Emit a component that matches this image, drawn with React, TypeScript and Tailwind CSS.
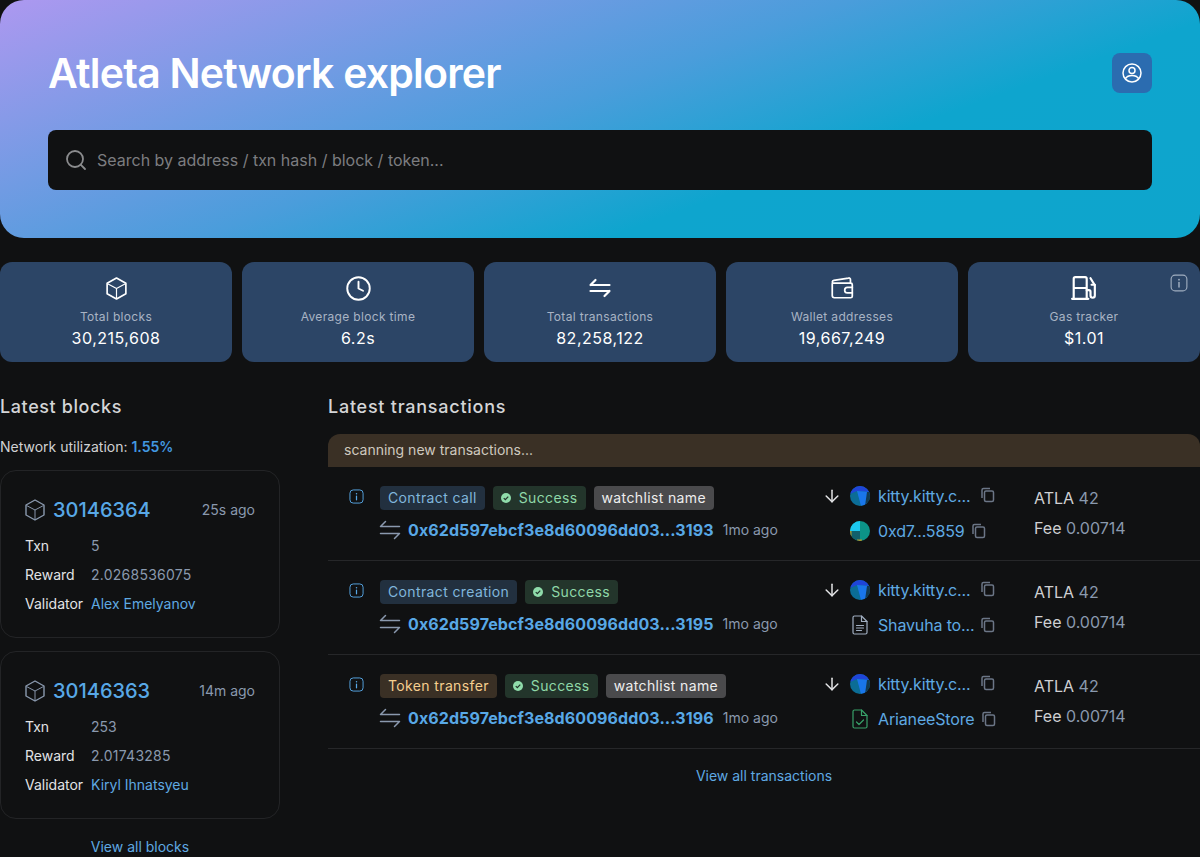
import { useState } from 'react'
import { Search, Clock, ArrowDown } from 'lucide-react'

// ── small drawn icons ──

const CubeIcon = ({ className, strokeWidth = 1.5 }: { className?: string; strokeWidth?: number }) => (
  <svg viewBox="0 0 24 24" fill="none" stroke="currentColor" strokeWidth={strokeWidth} strokeLinejoin="round" className={className}>
    <path d="M12 2 21 7v10l-9 5-9-5V7l9-5Z" />
    <path d="M3.500 7.500 12 12l8.500-4.500M12 12v10" strokeWidth={strokeWidth * 0.7} />
  </svg>
)

const SwapIcon = ({ className, strokeWidth = 1.6, gap = 6.5 }: { className?: string; strokeWidth?: number; gap?: number }) => (
  <svg viewBox="0 0 24 24" fill="none" stroke="currentColor" strokeWidth={strokeWidth} strokeLinecap="round" strokeLinejoin="round" className={className}>
    <path d={`M2.500 ${12 - gap / 2}h19M2.500 ${12 - gap / 2}l5-5`} />
    <path d={`M21.500 ${12 + gap / 2}h-19M21.500 ${12 + gap / 2}l-5 5`} />
  </svg>
)

const WalletIcon = ({ className }: { className?: string }) => (
  <svg viewBox="0 0 24 24" fill="none" stroke="currentColor" strokeWidth="1.600" strokeLinejoin="round" strokeLinecap="round" className={className}>
    <path d="M3 8v11a2 2 0 0 0 2 2h15a1.500 1.500 0 0 0 1.500-1.500V9a1.500 1.500 0 0 0-1.500-1.500H4.500A1.500 1.500 0 0 1 3 6.500 1.800 1.800 0 0 1 4.500 5L18 2.800c1-.2 1.800.5 1.800 1.500v3.200" />
    <path d="M21.500 11.500H17a2.500 2.500 0 0 0 0 5h4.500" />
  </svg>
)

const GasIcon = ({ className }: { className?: string }) => (
  <svg viewBox="0 0 24 24" fill="none" stroke="currentColor" strokeWidth="2" strokeLinejoin="round" strokeLinecap="round" className={className}>
    <path d="M1 22h15M2.500 22V3.500A1.500 1.500 0 0 1 4 2H13A1.500 1.500 0 0 1 14.500 3.500V22M2.500 12h12" />
    <path d="M14.500 14h2a1.500 1.500 0 0 1 1.500 1.500v3.500a2 2 0 0 0 4 0V9.500L18 3" />
    <path d="M19 9h3" />
  </svg>
)

const InfoIcon = ({ className }: { className?: string }) => (
  <svg viewBox="0 0 16 16" fill="none" className={className}>
    <rect x="1" y="1" width="14" height="14" rx="3.500" stroke="currentColor" strokeWidth="1" />
    <circle cx="8" cy="5" r=".8" fill="currentColor" />
    <path d="M8 7.500v4" stroke="currentColor" strokeWidth="1.300" strokeLinecap="round" />
  </svg>
)

const UserIcon = ({ className }: { className?: string }) => (
  <svg viewBox="0 0 20 20" fill="none" stroke="currentColor" strokeWidth="1.500" className={className}>
    <circle cx="10" cy="10" r="9" />
    <circle cx="10" cy="7.500" r="3" />
    <path d="M3.500 15.500C5 13 7.500 12.500 10 12.500s5 .5 6.500 3" />
  </svg>
)

const CopyIcon = ({ className }: { className?: string }) => (
  <svg viewBox="0 0 16 16" fill="none" stroke="currentColor" strokeWidth="1.500" strokeLinejoin="round" className={className}>
    <rect x="4.500" y="4" width="9" height="10.500" rx="1.500" />
    <path d="M2 11V3A1.500 1.500 0 0 1 3.500 1.500H10" />
  </svg>
)

const SuccessIcon = () => (
  <svg viewBox="0 0 12 12" className="w-[10px] h-[10px] shrink-0">
    <circle cx="6" cy="6" r="6" fill="#8fdcaa" />
    <path d="M3.300 6.200 5.200 8l3.500-3.700" fill="none" stroke="#23352b" strokeWidth="1.500" />
  </svg>
)

const DocIcon = ({ className, check }: { className?: string; check?: boolean }) => (
  <svg viewBox="0 0 16 20" fill="none" stroke="currentColor" strokeWidth="1.200" strokeLinejoin="round" strokeLinecap="round" className={className}>
    <path d="M2.500 1h7L15 6.500V17.500a1.500 1.500 0 0 1-1.500 1.500h-11A1.500 1.500 0 0 1 1 17.500v-15A1.500 1.500 0 0 1 2.500 1Z" />
    <path d="M9.500 1v5.500H15" />
    {check ? <path d="M4.500 13l2.500 2.500 4.500-4.500" /> : <path d="M4.500 10.500h7M4.500 13h7M4.500 15.500h5" />}
  </svg>
)

// identicons are just little pie shapes
const KittyAvatar = () => (
  <svg viewBox="0 0 20 20" className="w-5 h-5 shrink-0 rounded-full">
    <rect width="20" height="20" fill="#0b6d96" />
    <path d="M0 0h20v6L7 5 0 8Z" fill="#1f45d8" />
    <path d="M7 5l13 1-4 14H11Z" fill="#1976ea" />
    <path d="M17 6h3v14h-5Z" fill="#123a52" />
  </svg>
)

const PieAvatar = () => (
  <svg viewBox="0 0 20 20" className="w-5 h-5 shrink-0 rounded-full">
    <rect width="20" height="20" fill="#0c9488" />
    <path d="M0 0h10v10H0Z" fill="#1cc8ef" />
    <path d="M0 10h10v10H0Z" fill="#11606c" />
    <path d="M0 10h1.500v10H0ZM7 18.500h5V20H7Z" fill="#b59a2a" />
  </svg>
)

// ── data ──

const STATS = [
  { icon: <CubeIcon className="w-[25px] h-[25px]" strokeWidth={1.6} />, label: 'Total blocks', value: '30,215,608' },
  { icon: <Clock className="w-[27px] h-[27px]" strokeWidth={1.7} />, label: 'Average block time', value: '6.2s' },
  { icon: <SwapIcon className="w-6 h-6" strokeWidth={2.200} gap={6} />, label: 'Total transactions', value: '82,258,122' },
  { icon: <WalletIcon className="w-[26px] h-[26px]" />, label: 'Wallet addresses', value: '19,667,249' },
  { icon: <GasIcon className="w-[26px] h-[26px]" />, label: 'Gas tracker', value: '$1.01', info: true },
]

const BLOCKS = [
  { num: '30146364', ago: '25s ago', txn: '5', reward: '2.0268536075', validator: 'Alex Emelyanov' },
  { num: '30146363', ago: '14m ago', txn: '253', reward: '2.01743285', validator: 'Kiryl Ihnatsyeu' },
]

const TXS = [
  {
    type: 'Contract call', typeClass: 'bg-[#22303f] text-[#80b6dc]', watch: true,
    hash: '0x62d597ebcf3e8d60096dd03...3193',
    to: '0xd7...5859', toIcon: <PieAvatar />,
  },
  {
    type: 'Contract creation', typeClass: 'bg-[#22303f] text-[#80b6dc]', watch: false,
    hash: '0x62d597ebcf3e8d60096dd03...3195',
    to: 'Shavuha to...', toIcon: <DocIcon className="w-[16px] h-5 ml-[2px] mr-[2px] shrink-0 text-[#a0aec0]" />,
  },
  {
    type: 'Token transfer', typeClass: 'bg-[#3a3025] text-[#f6cf8f]', watch: true,
    hash: '0x62d597ebcf3e8d60096dd03...3196',
    to: 'ArianeeStore', toIcon: <DocIcon check className="w-[16px] h-5 ml-[2px] mr-[2px] shrink-0 text-[#38a169]" />,
  },
]

export default function App() {
  const [query, setQuery] = useState('')

  return (
    <div className="min-h-screen bg-[#101112] font-['Inter',sans-serif] text-sm text-[#e2e3e5]">
      {/* ── Hero ── */}
      <header className="h-[238px] rounded-3xl px-12 pt-12 bg-[linear-gradient(160deg,#ad98f0_0%,#4a9ddb_46%,#0ea5ce_68%,#0ea5cc_100%)]">
        <div className="flex items-center justify-between h-[50px]">
          <h1 className="text-[41px] leading-[50px] font-semibold text-white tracking-[-0.78px]">
            Atleta Network explorer
          </h1>
          <button className="w-10 h-10 rounded-lg bg-[#2b6cb0] flex items-center justify-center text-white">
            <UserIcon className="w-5 h-5" />
          </button>
        </div>
        <div className="mt-[32px] h-[60px] rounded-lg bg-[#101112] flex items-center pl-[16px] pr-4 gap-[9px]">
          <Search className="w-6 h-6 text-[#8b8c8e]" strokeWidth={1.8} />
          <input
            value={query}
            onChange={(e) => setQuery(e.target.value)}
            placeholder="Search by address / txn hash / block / token..."
            className="flex-1 bg-transparent outline-none text-base text-white placeholder:text-[#7c7d80]"
          />
        </div>
      </header>

      {/* ── Stats ── */}
      <section className="grid grid-cols-5 gap-[10px] mt-6">
        {STATS.map((s) => (
          <div key={s.label} className="relative h-[100px] rounded-xl bg-[#2c4566] flex flex-col items-center pt-[14px] text-white">
            {s.info && <InfoIcon className="absolute top-[12px] right-[12px] w-[18px] h-[18px] text-[#a0aec0]" />}
            <div className="h-6 flex items-center justify-center">{s.icon}</div>
            <div className="mt-[9px] text-xs leading-4 tracking-[0.33px] text-[#a9b4c4]">{s.label}</div>
            <div className="mt-[1px] text-base leading-6 tracking-[0.5px]">{s.value}</div>
          </div>
        ))}
      </section>

      {/* ── Lists ── */}
      <main className="flex gap-12 mt-[32px]">
        <section className="w-[280px] shrink-0">
          <h2 className="pt-px text-lg leading-6 font-medium text-[#d4d5d7] tracking-[0.6px]">Latest blocks</h2>
          <div className="mt-[18px] leading-[20px] text-[#d0d1d3]">
            Network utilization: <span className="font-semibold text-[#4299e1]">1.55%</span>
          </div>
          <div className="mt-[13px] flex flex-col gap-[13px]">
            {BLOCKS.map((b) => (
              <div key={b.num} className="h-[168px] rounded-2xl border border-[#232426] px-6 pt-[20px]">
                <div className="flex items-center h-[38px]">
                  <CubeIcon className="w-6 h-6 -ml-[2px] text-[#8a99ae]" strokeWidth={1.4} />
                  <span className="ml-[6px] text-xl font-medium text-[#58a8e6]">{b.num}</span>
                  <span className="ml-auto text-[#8a99ae]">{b.ago}</span>
                </div>
                <div className="mt-[7px] grid grid-cols-[66px_1fr] gap-y-[9px] leading-5">
                  <span>Txn</span>
                  <span className="text-[#8a99ae]">{b.txn}</span>
                  <span>Reward</span>
                  <span className="text-[#8a99ae] tracking-[0.25px]">{b.reward}</span>
                  <span>Validator</span>
                  <span className="text-[#5fa9e2]">{b.validator}</span>
                </div>
              </div>
            ))}
          </div>
          <div className="mt-[18px] text-center text-[#5fa9e2] leading-5">View all blocks</div>
        </section>

        <section className="flex-1 min-w-0">
          <h2 className="pt-px text-lg leading-6 font-medium text-[#d4d5d7] tracking-[0.75px]">Latest transactions</h2>
          <div className="mt-[15px] h-[33px] pb-px rounded-t-xl bg-[#3a3025] px-4 flex items-center text-[#cfc9bf]">
            scanning new transactions...
          </div>
          {TXS.map((t) => (
            <div key={t.hash} className="h-[94px] border-b border-[#262729] flex pl-[21px]">
              <InfoIcon className="w-[15px] h-[15px] mt-[22px] text-[#58a8e6] shrink-0" />
              <div className="ml-[16px] w-[445px] shrink-0 pt-[19px]">
                <div className="flex gap-2 tracking-[0.37px]">
                  <span className={`h-6 px-2 rounded flex items-center ${t.typeClass}`}>{t.type}</span>
                  <span className="h-6 px-2 rounded flex items-center gap-[8px] bg-[#23352b] text-[#8fd8a8]">
                    <SuccessIcon />
                    Success
                  </span>
                  {t.watch && <span className="h-6 px-2 rounded flex items-center bg-[#4a4a4c] text-[#eeeeee]">watchlist name</span>}
                </div>
                <div className="mt-[8px] flex items-center h-6">
                  <SwapIcon className="w-6 h-6 -ml-[2px] text-[#8a99ae]" strokeWidth={1.5} gap={7} />
                  <span className="ml-[6px] text-base font-bold tracking-[0.1px] text-[#58a8e6]">{t.hash}</span>
                  <span className="ml-[9px] text-[#8a99ae]">1mo ago</span>
                </div>
              </div>
              <div className="w-[209px] shrink-0 pt-[17px]">
                <div className="flex items-center h-6">
                  <ArrowDown className="w-5 h-5 -ml-[3px] mr-[8px] text-[#e2e3e5]" strokeWidth={1.8} />
                  <KittyAvatar />
                  <span className="ml-2 text-base tracking-[-0.15px] text-[#5fa9e2]">kitty.kitty.c...</span>
                  <CopyIcon className="ml-[10px] -mt-[2px] w-4 h-4 text-[#6b7686]" />
                </div>
                <div className="flex items-center h-6 mt-[11px] pl-[25px]">
                  {t.toIcon}
                  <span className="ml-2 text-base tracking-[-0.15px] text-[#5fa9e2]">{t.to}</span>
                  <CopyIcon className="ml-[6px] w-4 h-4 text-[#6b7686]" />
                </div>
              </div>
              <div className="flex-1 pt-[19px] text-base">
                <div className="h-6 leading-6 text-[#cfd0d2]">
                  ATLA <span className="text-[#8a99ae]">42</span>
                </div>
                <div className="mt-[6px] h-6 leading-6 text-[#cfd0d2]">
                  Fee <span className="text-[#8a99ae]">0.00714</span>
                </div>
              </div>
            </div>
          ))}
          <div className="mt-[17px] text-center text-[#5fa9e2] leading-5">View all transactions</div>
        </section>
      </main>
    </div>
  )
}
